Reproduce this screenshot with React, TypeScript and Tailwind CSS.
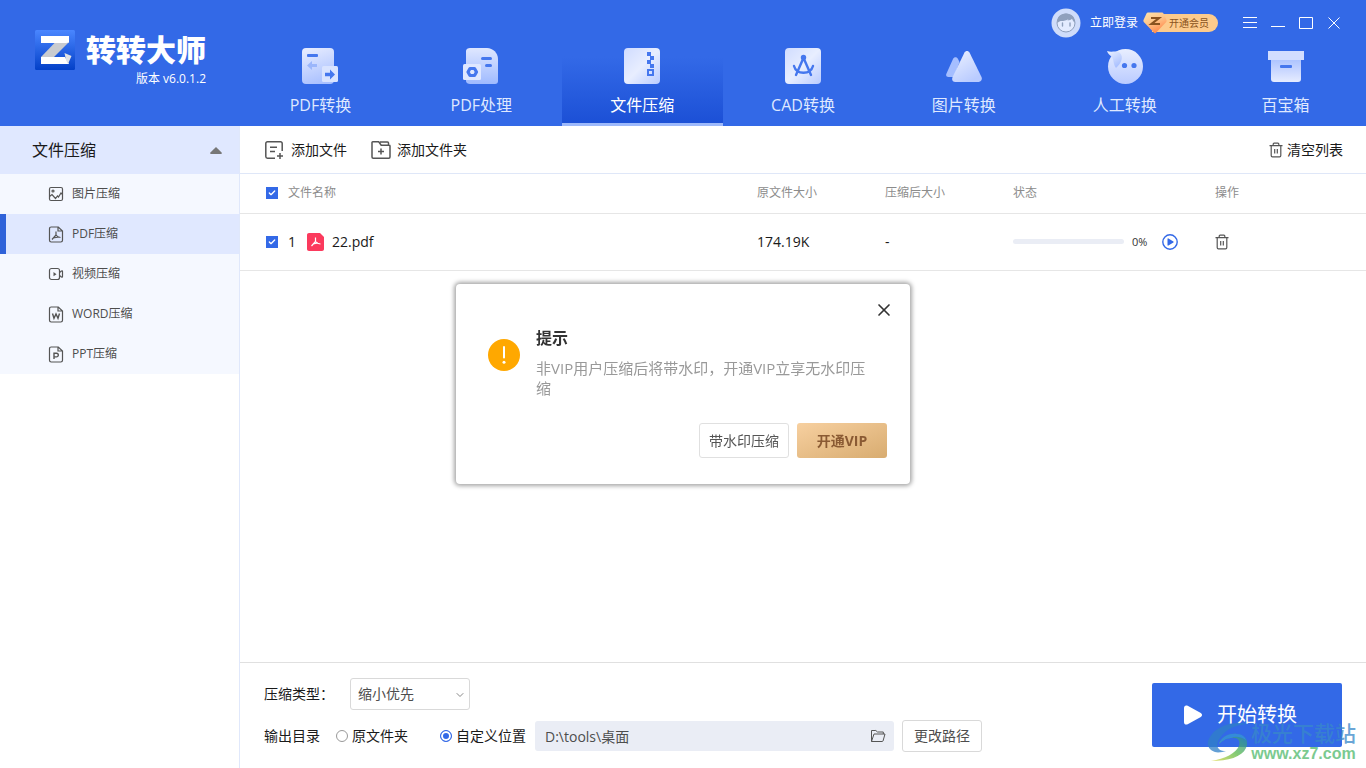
import { useState } from 'react';
import { Check, ChevronDown, X } from 'lucide-react';

const TABS = [
  { label: 'PDF转换', icon: <PdfConvertIcon /> },
  { label: 'PDF处理', icon: <PdfProcessIcon /> },
  { label: '文件压缩', icon: <ZipIcon />, active: true },
  { label: 'CAD转换', icon: <CadIcon /> },
  { label: '图片转换', icon: <PictureIcon /> },
  { label: '人工转换', icon: <ServiceIcon /> },
  { label: '百宝箱', icon: <BoxIcon /> },
];

const MENU = [
  { label: '图片压缩', icon: <ImageFileIcon /> },
  { label: 'PDF压缩', icon: <PdfFileIcon />, active: true },
  { label: '视频压缩', icon: <VideoIcon /> },
  { label: 'WORD压缩', icon: <LetterFileIcon d="M4.500 7.500l1.500 4.800L8 8l2 4.300 1.500-4.800" /> },
  { label: 'PPT压缩', icon: <LetterFileIcon d="M6 13V7.300h2.500a1.800 1.800 0 0 1 0 3.600H6" /> },
];

export default function App() {
  const [dialogOpen, setDialogOpen] = useState(true);

  return (
    <div className="flex min-h-screen flex-col bg-white font-['Open_Sans','Noto_Sans_CJK_SC',sans-serif] text-sm text-[#1a1a1a]">
      <Header />
      <div className="flex flex-1">
        <Sidebar />
        <main className="flex min-w-0 flex-1 flex-col">
          <Toolbar />
          <FileTable />
          <Footer />
        </main>
      </div>
      {dialogOpen && <VipDialog onClose={() => setDialogOpen(false)} />}
    </div>
  );
}

function Header() {
  return (
    <header className="flex bg-[#3369e7] text-white">
      <div className="flex w-60 shrink-0 gap-[11px] pt-[30px] pl-[35px]">
        <LogoIcon />
        <div className="flex flex-col items-end">
          <h1 className="text-[30px] leading-10 font-black">转转大师</h1>
          <p className="text-xs leading-[18px]">版本 v6.0.1.2</p>
        </div>
      </div>
      <div className="flex min-w-0 flex-1 flex-col">
        <div className="flex h-[46px] items-center justify-end pr-[18px]">
          <button className="flex items-center gap-[9px] text-xs">
            <AvatarIcon />
            立即登录
          </button>
          <button className="relative ml-[14px] h-[18px] rounded-r-full bg-[#fdcb8c] pr-[9px] pl-[17px] text-[10px] leading-[18px] text-[#8a5320]">
            <VipBadgeIcon />
            开通会员
          </button>
          <div className="ml-[18px] flex">
            <button aria-label="菜单" className="flex h-7 w-7 items-center justify-center">
              <WindowIcon d="M0 1.5h14M0 6.5h14M0 11.5h14" />
            </button>
            <button aria-label="最小化" className="flex h-7 w-7 items-center justify-center">
              <WindowIcon d="M0 10.5h14" />
            </button>
            <button aria-label="最大化" className="flex h-7 w-7 items-center justify-center">
              <WindowIcon d="M.5 1.5h13v11H.5z" />
            </button>
            <button aria-label="关闭" className="flex h-7 w-7 items-center justify-center">
              <WindowIcon d="M1.5 1.5l11 11M12.5 1.5l-11 11" />
            </button>
          </div>
        </div>
        <nav className="flex">
          {TABS.map((tab) => (
            <a
              key={tab.label}
              href="#"
              className={
                tab.active
                  ? 'flex h-20 flex-1 flex-col items-center gap-[9px] border-b-[3px] border-[#9db9fb] bg-linear-to-b from-[#3369e7] from-15% to-[#1c50d6] pt-0.5'
                  : 'flex h-20 flex-1 flex-col items-center gap-[9px] pt-0.5 text-[#dfe8ff]'
              }
            >
              {tab.icon}
              <span className="text-base leading-6">{tab.label}</span>
            </a>
          ))}
        </nav>
      </div>
    </header>
  );
}

function Sidebar() {
  return (
    <aside className="w-60 shrink-0 border-r border-[#e0e8fb]">
      <button className="flex h-12 w-full items-center justify-between bg-[#e0e8ff] pr-[17px] pl-8 text-base">
        文件压缩
        <svg width="12" height="7" viewBox="0 0 12 7" fill="#777">
          <path d="M6 0l5.600 5.600c.5.700.2 1.400-.6 1.400H1C.2 7-.1 6.300.4 5.600z" />
        </svg>
      </button>
      <ul className="bg-[#f5f8ff] text-xs text-[#4d4d4d]">
        {MENU.map((item) => (
          <li key={item.label}>
            <a
              href="#"
              className={
                item.active
                  ? 'flex h-10 items-center gap-2 border-l-6 border-[#2f62d9] bg-[#e0e8ff] pl-[42px]'
                  : 'flex h-10 items-center gap-2 pl-12'
              }
            >
              {item.icon}
              {item.label}
            </a>
          </li>
        ))}
      </ul>
    </aside>
  );
}

function Toolbar() {
  return (
    <div className="flex h-12 items-center gap-6 border-b border-[#dfe7f8] pr-[23px] pl-6">
      <button className="flex items-center gap-[7px]">
        <AddFileIcon />
        添加文件
      </button>
      <button className="flex items-center gap-[6px]">
        <AddFolderIcon />
        添加文件夹
      </button>
      <button className="ml-auto flex items-center gap-1">
        <TrashIcon />
        清空列表
      </button>
    </div>
  );
}

function FileTable() {
  return (
    <div className="flex-1">
      <table className="w-full table-fixed text-left">
        <colgroup>
          <col />
          <col className="w-32" />
          <col className="w-32" />
          <col className="w-[202px]" />
          <col className="w-[151px]" />
        </colgroup>
        <thead className="text-xs text-[#8c8c8c]">
          <tr className="h-[39px] border-b border-[#e6e6e6]">
            <th className="pl-[26px] font-normal">
              <div className="flex items-center gap-[10px]">
                <Checkbox label="全选" />
                文件名称
              </div>
            </th>
            <th className="font-normal">原文件大小</th>
            <th className="font-normal">压缩后大小</th>
            <th className="font-normal">状态</th>
            <th className="font-normal">操作</th>
          </tr>
        </thead>
        <tbody>
          <tr className="h-[57px] border-b border-[#e6e6e6]">
            <td className="pl-[26px]">
              <div className="flex items-center">
                <Checkbox label="22.pdf" />
                <span className="ml-[10px] w-[19px]">1</span>
                <PdfBadgeIcon />
                <span className="ml-[7px]">22.pdf</span>
              </div>
            </td>
            <td>174.19K</td>
            <td>-</td>
            <td>
              <div className="flex items-center">
                <div className="h-[5px] w-[111px] rounded-full bg-[#eaedf5]" />
                <span className="w-[38px] pl-2 text-[11px] text-[#333]">0%</span>
                <button aria-label="开始">
                  <svg width="16" height="16" viewBox="0 0 16 16" fill="none">
                    <circle cx="8" cy="8" r="7.200" stroke="#3369e7" strokeWidth="1.400" />
                    <path d="M5.500 5v6c0 .6.500.8.900.5l5-3c.4-.3.4-.7 0-1l-5-3C6 4.200 5.500 4.400 5.500 5z" fill="#3369e7" />
                  </svg>
                </button>
              </div>
            </td>
            <td>
              <button aria-label="删除" className="block">
                <TrashIcon />
              </button>
            </td>
          </tr>
        </tbody>
      </table>
    </div>
  );
}

function Checkbox({ label }: { label: string }) {
  return (
    <span className="relative flex h-3 w-3">
      <input
        type="checkbox"
        defaultChecked
        aria-label={label}
        className="peer h-3 w-3 appearance-none border border-[#3369e7] checked:bg-[#3369e7]"
      />
      <Check className="pointer-events-none absolute inset-0.5 hidden h-2 w-2 text-white peer-checked:block" strokeWidth={4} />
    </span>
  );
}

function Footer() {
  return (
    <footer className="relative flex items-start justify-between border-t border-[#e0e0e0] pt-[15px] pr-6 pb-4 pl-6">
      <div className="flex flex-col gap-[10px]">
        <div className="flex h-8 items-center">
          <label htmlFor="type" className="w-[86px]">
            压缩类型：
          </label>
          <div className="relative">
            <select
              id="type"
              className="h-8 w-[120px] appearance-none rounded-[3px] border border-[#d9d9d9] bg-white pl-[7px] text-[#4d4d4d]"
            >
              <option>缩小优先</option>
            </select>
            <ChevronDown className="pointer-events-none absolute top-[11px] right-1 h-3 w-3 text-[#888]" />
          </div>
        </div>
        <div className="flex h-8 items-center">
          <span className="w-[72px]">输出目录</span>
          <label className="flex w-[104px] items-center gap-1">
            <input
              type="radio"
              name="output"
              className="h-3 w-3 appearance-none rounded-full border border-[#999] bg-white checked:border-[#3369e7] checked:bg-[#3369e7] checked:inset-ring-2 checked:inset-ring-white"
            />
            原文件夹
          </label>
          <label className="flex w-[95px] items-center gap-1">
            <input
              type="radio"
              name="output"
              defaultChecked
              className="h-3 w-3 appearance-none rounded-full border border-[#999] bg-white checked:border-[#3369e7] checked:bg-[#3369e7] checked:inset-ring-2 checked:inset-ring-white"
            />
            自定义位置
          </label>
          <div className="relative">
            <input
              type="text"
              aria-label="输出路径"
              defaultValue="D:\tools\桌面"
              className="h-[30px] w-[359px] rounded-[3px] bg-[#eaedf5] pr-8 pl-[10px] text-[#4d4d4d]"
            />
            <button aria-label="打开目录" className="absolute top-2 right-2">
              <FolderOpenIcon />
            </button>
          </div>
          <button className="ml-2 h-8 w-20 rounded-[3px] border border-[#d9d9d9] text-[#4d4d4d]">更改路径</button>
        </div>
      </div>
      <button className="mt-[5px] flex h-16 w-[190px] items-center gap-[14px] rounded-xs bg-[#3369e7] pl-[31px] text-xl text-white">
        <svg width="20" height="20" viewBox="0 0 20 20" fill="#fff">
          <path d="M1 3C1 .6 2.800-.2 4.700.8L17.800 8c1.700 1 1.700 3 0 4L4.700 19.200C2.800 20.200 1 19.400 1 17z" />
        </svg>
        开始转换
      </button>
      <SiteMark />
    </footer>
  );
}

function SiteMark() {
  return (
    <div className="pointer-events-none absolute right-[10px] bottom-[5px] flex items-center gap-0.5 opacity-75">
      <svg width="42" height="40" viewBox="0 0 42 40">
        <defs>
          <linearGradient id="swirl" x1="0" y1="1" x2="1" y2="0">
            <stop offset="0" stopColor="#e0d83c" />
            <stop offset=".5" stopColor="#58b947" />
            <stop offset="1" stopColor="#2389b8" />
          </linearGradient>
        </defs>
        <path d="M41 2C25-1 12 4 5 12c-6 7-6 15 3 18 3 1 8 0 11-1-9 0-11-6-6-13C19 7 28 3 41 2z" fill="#2f80c8" />
        <path d="M12 22c2-6 9-11 18-10 9 1 12 7 9 14-4 9-18 13-35 13 14-2 25-8 28-15 2-6-2-9-8-8-5 0-9 3-12 6z" fill="url(#swirl)" />
        <path d="M12 22c2-6 9-11 18-10 5 0 8 3 9 6-6-4-11-4-15-2-5 0-9 3-12 6z" fill="#3596d8" />
      </svg>
      <div className="flex flex-col items-center">
        <span className="text-[21px] leading-6 font-medium text-[#3988c9]">极光下载站</span>
        <span className="font-['Liberation_Sans',sans-serif] text-base leading-[18px] font-bold text-[#4fb96b]">www.xz7.com</span>
      </div>
    </div>
  );
}

function VipDialog({ onClose }: { onClose: () => void }) {
  return (
    <div className="pointer-events-none fixed inset-0 flex items-center justify-center">
      <div
        role="dialog"
        aria-labelledby="dialog-title"
        className="pointer-events-auto relative w-[454px] rounded-[4px] bg-white pt-11 pr-[23px] pb-[26px] pl-8 shadow-[0_0_4px_2px_rgba(0,0,0,0.35)]"
      >
        <button aria-label="关闭" onClick={onClose} className="absolute top-4 right-4">
          <X className="h-5 w-5 text-[#333]" />
        </button>
        <div className="flex gap-4">
          <svg width="32" height="32" viewBox="0 0 32 32" className="mt-[11px] shrink-0">
            <circle cx="16" cy="16" r="16" fill="#ffa800" />
            <path d="M16 8v10.500" stroke="#fff" strokeWidth="2" strokeLinecap="round" />
            <circle cx="16" cy="23.300" r="1.500" fill="#fff" />
          </svg>
          <div className="pr-4">
            <h2 id="dialog-title" className="text-base leading-5 font-bold text-[#333]">
              提示
            </h2>
            <p className="mt-[10px] text-[15px] leading-5 text-[#999]">非VIP用户压缩后将带水印，开通VIP立享无水印压缩</p>
          </div>
        </div>
        <div className="mt-[25px] flex justify-end gap-2">
          <button className="h-[35px] w-[90px] rounded-[3px] border border-[#e0e0e0] text-[#555]">带水印压缩</button>
          <button className="h-[35px] w-[90px] rounded-[3px] bg-linear-to-br from-[#f7d0a0] to-[#d8ac70] font-bold text-[#8a5a33]">
            开通VIP
          </button>
        </div>
      </div>
    </div>
  );
}

function WindowIcon({ d }: { d: string }) {
  return (
    <svg width="14" height="14" viewBox="0 0 14 14" fill="none" stroke="#fff">
      <path d={d} />
    </svg>
  );
}

function LogoIcon() {
  return (
    <svg width="40" height="40" viewBox="0 0 40 40" className="shrink-0">
      <defs>
        <linearGradient id="logo" x1="0" y1="0" x2="0" y2="1">
          <stop offset="0" stopColor="#4a86ff" />
          <stop offset="1" stopColor="#0340c8" />
        </linearGradient>
      </defs>
      <rect width="40" height="40" rx="1.500" fill="url(#logo)" />
      <path d="M20 12.500L34 12 19 27H6z" fill="#c9cbcf" />
      <path d="M6 6h28v6.500L31 13H6z" fill="#fff" />
      <path d="M6 27h24l4 7H6z" fill="#fff" />
      <path d="M29.500 23l7 3-3.500 8-2-4z" fill="#dfe1e5" />
    </svg>
  );
}

function AvatarIcon() {
  return (
    <svg width="30" height="30" viewBox="0 0 30 30">
      <circle cx="15" cy="15" r="14.500" fill="#cfdcfa" />
      <circle cx="15" cy="15" r="9" fill="#e3ebff" stroke="#8fa0bd" />
      <path d="M6.500 15C5.500 9 9.500 5.500 15 5.500S24.500 9 23.500 15c-1-1.500-2-2.700-2.500-4.200-1 1.200-2.500 1.700-4.500 1.700l1-1.500c-2 1.500-4.500 2-7.500 2-1.500.3-2.500 1-3.500 2z" fill="#8fa0bd" />
      <path d="M11.500 15v3M19 15v3" stroke="#8fa0bd" strokeWidth="1.400" strokeLinecap="round" />
    </svg>
  );
}

function VipBadgeIcon() {
  return (
    <svg width="24" height="22" viewBox="0 0 24 22" className="absolute top-[-2px] left-[-9px]">
      <defs>
        <linearGradient id="vip" x1="0" y1="0" x2=".5" y2="1">
          <stop offset="0" stopColor="#ffe3ad" />
          <stop offset=".5" stopColor="#ffc68a" />
          <stop offset="1" stopColor="#ff8a4e" />
        </linearGradient>
      </defs>
      <path d="M5 .5h14c.7 0 1.200.3 1.500.9l3 6.600c.3.700.2 1.300-.3 1.900L13 20.800c-.6.700-1.400.7-2 0L.8 9.900C.3 9.300.2 8.700.5 8l3-6.600C3.800.8 4.300.5 5 .5z" fill="url(#vip)" />
      <path d="M8 6h8l-7.500 6H17" fill="none" stroke="#8a5320" strokeWidth="2.200" />
    </svg>
  );
}

function IconGradient({ id, flip }: { id: string; flip?: boolean }) {
  return (
    <linearGradient id={id} x1="0" y1="0" x2={flip ? '0' : '1'} y2="1">
      <stop offset="0" stopColor={flip ? '#a9c1ff' : '#d0dcff'} />
      <stop offset=".5" stopColor={flip ? '#c8d6ff' : '#e8eeff'} />
      <stop offset="1" stopColor={flip ? '#e6ecff' : '#b9cbff'} />
    </linearGradient>
  );
}

function PdfConvertIcon() {
  return (
    <svg width="36" height="36" viewBox="0 0 36 36">
      <defs>
        <linearGradient id="convert" x1=".3" y1="0" x2=".6" y2="1">
          <stop offset="0" stopColor="#e4eaff" />
          <stop offset="1" stopColor="#a9c0ff" />
        </linearGradient>
      </defs>
      <rect x="0" y="0" width="32" height="36" rx="4" fill="url(#convert)" />
      <rect x="5" y="6" width="11" height="3" rx="1" fill="#4577ee" />
      <path d="M5 17.500l5-4.500v3h5v3h-5v3z" fill="#9bb6fb" />
      <rect x="20" y="18" width="16" height="16" rx="1.500" fill="#d9e3ff" />
      <path d="M33 26.500l-5-5v3.300h-5v3.400h5v3.300z" fill="#4577ee" />
    </svg>
  );
}

function PdfProcessIcon() {
  return (
    <svg width="36" height="36" viewBox="0 0 36 36">
      <defs>
        <linearGradient id="process" x1="0" y1="0" x2="0" y2="1">
          <stop offset="0" stopColor="#dfe7ff" />
          <stop offset="1" stopColor="#9fbaff" />
        </linearGradient>
      </defs>
      <path d="M7 0h17c6 0 11 5 11 11v22c0 2-1 3-3 3H7c-2 0-4-1-4-3V3c0-2 2-3 4-3z" fill="url(#process)" />
      <rect x="18" y="9" width="11" height="3" rx="1.500" fill="#4577ee" />
      <rect x="22" y="16" width="7" height="3" rx="1.500" fill="#4577ee" />
      <rect x="0" y="16" width="18" height="16" rx="1.500" fill="#dfe7ff" />
      <path d="M7 20.500h4.500l2 3.500-2 3.500H7L5 24z" fill="none" stroke="#4577ee" strokeWidth="3.200" strokeLinejoin="round" />
    </svg>
  );
}

function ZipIcon() {
  return (
    <svg width="36" height="36" viewBox="0 0 36 36" fill="#4577ee">
      <defs>
        <IconGradient id="zip" />
      </defs>
      <rect width="36" height="36" rx="4" fill="url(#zip)" />
      <path d="M23 4h4v4h-4zM26 8h4v4h-4zM23 12h4v4h-4zM26 16h4v4h-4z" />
      <path d="M23 21h7v7h-7zM25 23v3h3v-3z" fillRule="evenodd" />
    </svg>
  );
}

function CadIcon() {
  return (
    <svg width="36" height="36" viewBox="0 0 36 36" fill="none" stroke="#4577ee" strokeWidth="2.400" strokeLinecap="round">
      <defs>
        <IconGradient id="cad" />
      </defs>
      <rect width="36" height="36" rx="4" fill="url(#cad)" stroke="none" />
      <circle cx="18.500" cy="9.500" r="2.700" fill="#4577ee" stroke="none" />
      <path d="M18 11l-7 16M19 11l7 16M9 18c2.500 9 16.500 9 19 0" />
    </svg>
  );
}

function PictureIcon() {
  return (
    <svg width="36" height="36" viewBox="0 0 36 36">
      <defs>
        <linearGradient id="peak" x1="0" y1="0" x2=".6" y2="1">
          <stop offset="0" stopColor="#edf2ff" />
          <stop offset="1" stopColor="#b9cbff" />
        </linearGradient>
      </defs>
      <path d="M7 11c1-2.500 4-2.500 5 0l1.500 3L8 29H2.500c-2 0-3-1.500-2-3.500z" fill="#a5beff" />
      <path d="M18.500 4.500c1.200-2 3.800-2 5 0L35.500 29c1 2.200-.2 5-2.800 5H9.300c-2.600 0-3.800-2.300-2.800-4.800z" fill="url(#peak)" />
    </svg>
  );
}

function ServiceIcon() {
  return (
    <svg width="36" height="36" viewBox="0 0 36 36">
      <defs>
        <linearGradient id="face" x1="0" y1="0" x2="0" y2="1">
          <stop offset="0" stopColor="#e8eeff" />
          <stop offset="1" stopColor="#bacbff" />
        </linearGradient>
        <linearGradient id="ear" x1="0" y1="0" x2=".5" y2="1">
          <stop offset="0" stopColor="#edf2ff" />
          <stop offset="1" stopColor="#a9c0ff" />
        </linearGradient>
      </defs>
      <circle cx="18.500" cy="18.500" r="17.500" fill="url(#face)" />
      <path d="M0 3c5 2 9-1 13 2 4 4 1 11-4 15-3-4-2-8-4-11C3 7 1 6 0 3z" fill="url(#ear)" />
      <circle cx="17.500" cy="17.500" r="2.600" fill="#4577ee" />
      <circle cx="27" cy="17.500" r="2.600" fill="#4577ee" />
    </svg>
  );
}

function BoxIcon() {
  return (
    <svg width="36" height="36" viewBox="0 0 36 36">
      <defs>
        <IconGradient id="box" flip />
      </defs>
      <path d="M3 10h30v21c0 2-1 3-3 3H6c-2 0-3-1-3-3z" fill="url(#box)" />
      <rect x="0" y="3" width="36" height="9" fill="#d2deff" />
      <rect x="12" y="17" width="12" height="3" rx="1" fill="#4577ee" />
    </svg>
  );
}

function ImageFileIcon() {
  return (
    <svg width="16" height="16" viewBox="0 0 16 16" fill="none" stroke="#555" strokeWidth="1.200">
      <rect x="1.500" y="1.500" width="13" height="13" rx="1.500" />
      <circle cx="5" cy="5" r="1" />
      <path d="M1.500 10.500L4 8.500l3.500 4 2-2.500 1 1L13 7l1.500 1.500" />
    </svg>
  );
}

function FileOutline() {
  return <path d="M10.300 1H3.200c-1 0-1.700.7-1.700 1.700v11.600c0 1 .7 1.700 1.700 1.700h9.600c1 0 1.700-.7 1.700-1.700V5zM10 1v4h4.500" />;
}

function PdfFileIcon() {
  return (
    <svg width="16" height="17" viewBox="0 0 16 17" fill="none" stroke="#555" strokeWidth="1.200">
      <FileOutline />
      <path d="M8 5.500v3.500L4 13.500M8 9c1 1.600 2.300 2.300 4.500 2.500M5 12l6-1" />
    </svg>
  );
}

function LetterFileIcon({ d }: { d: string }) {
  return (
    <svg width="16" height="17" viewBox="0 0 16 17" fill="none" stroke="#555" strokeWidth="1.200">
      <FileOutline />
      <path d={d} strokeWidth="1.400" />
    </svg>
  );
}

function VideoIcon() {
  return (
    <svg width="16" height="16" viewBox="0 0 16 16" fill="none" stroke="#555" strokeWidth="1.200">
      <rect x="1.500" y="2.500" width="10" height="11" rx="2" />
      <path d="M11.500 6.500l2-1.500c.6-.4 1-.2 1 .5v5c0 .7-.4.9-1 .5l-2-1.500" />
      <path d="M5.500 6v4.300l3-2.100z" fill="#555" stroke="none" />
    </svg>
  );
}

function AddFileIcon() {
  return (
    <svg width="20" height="20" viewBox="0 0 20 20" fill="none" stroke="#555" strokeWidth="1.500">
      <path d="M18.200 11V3.500c0-1-.7-1.700-1.700-1.700h-13c-1 0-1.700.7-1.700 1.700v13c0 1 .7 1.700 1.700 1.700H11M6 7.200h7M6 11.500h5M16 13v6M13 16h6" />
    </svg>
  );
}

function AddFolderIcon() {
  return (
    <svg width="20" height="20" viewBox="0 0 20 20" fill="none" stroke="#555" strokeWidth="1.500">
      <path d="M1 17V2.500c0-.5.300-.7.700-.7h6l2.500 3.500h8c.5 0 .8.300.8.700v11c0 .8-.5 1.200-1.200 1.200H2.200C1.500 18.200 1 17.800 1 17zM9 2h7.500c.6 0 1 .4 1 1v2M10 8.500v6M7 11.500h6" />
    </svg>
  );
}

function TrashIcon() {
  return (
    <svg width="14" height="16" viewBox="0 0 14 16" fill="none" stroke="#555" strokeWidth="1.200">
      <path d="M.5 3.600h13M4.200 3.500V2c0-.6.300-.9.900-.9h3.800c.6 0 .9.300.9.900v1.500M2.200 3.600v10c0 .8.400 1.300 1.200 1.300h7.200c.8 0 1.200-.5 1.200-1.300v-10M5.700 7v4.500M8.300 7v4.500" />
    </svg>
  );
}

function PdfBadgeIcon() {
  return (
    <svg width="18" height="18" viewBox="0 0 18 18">
      <path d="M2 0h11l4 4v12c0 1.200-.8 2-2 2H2c-1.200 0-2-.8-2-2V2C0 .8.800 0 2 0z" fill="#fb3a5d" />
      <path d="M8.500 4.500v4L4.500 13M8.500 8.500c1 1.700 2.300 2.300 5 2.500M6 11l5-1.200" fill="none" stroke="#fff" strokeWidth="1.200" />
    </svg>
  );
}

function FolderOpenIcon() {
  return (
    <svg width="16" height="14" viewBox="0 0 16 14" fill="none" stroke="#555">
      <path d="M1.500 12.500V1.500h4.300L7.500 3h5.800v2M1.500 12.500L4 5h11l-2 7c-.1.300-.4.500-.8.500z" strokeLinejoin="round" />
    </svg>
  );
}
